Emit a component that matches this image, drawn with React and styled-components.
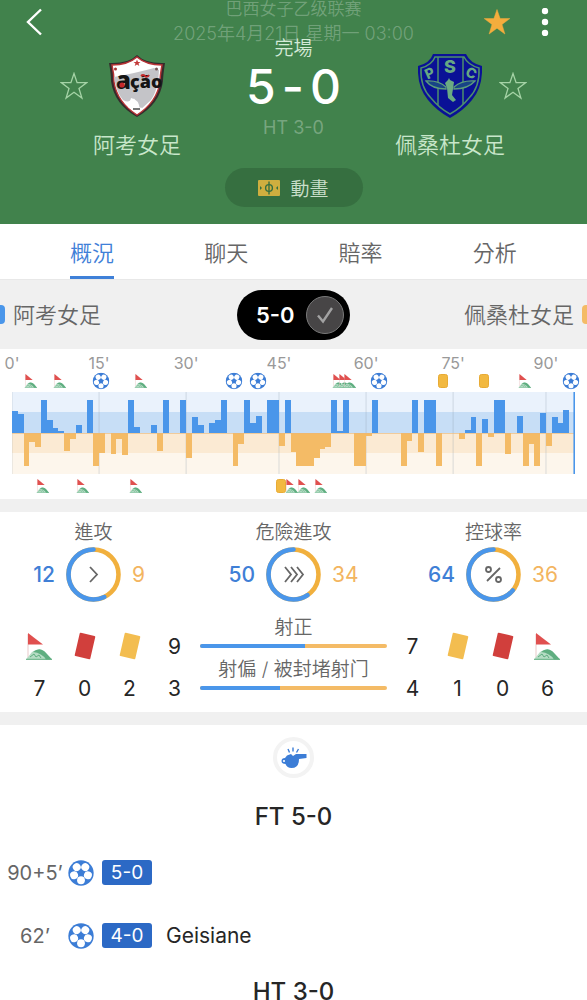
import React, { useState } from 'react'
import styled, { createGlobalStyle, ThemeProvider } from 'styled-components'

const theme = {
  color: {
    pitch: '#41824c',
    home: '#4a96ea',
    homeText: '#3f7fd6',
    away: '#f4bb66',
    awayText: '#f3b560',
    link: '#3f80d8',
    badge: '#2c69c5',
    text: '#262626',
    textMuted: '#666666',
    textFaint: '#999999',
    band: '#f0f0f0',
  },
  // the cut between light and regular, close to system CJK text
  weight: {
    label: 350,
  },
}

const GlobalStyle = createGlobalStyle`
  * {
    box-sizing: border-box;
  }

  body {
    margin: 0;
    background: #ffffff;
    font-family: Inter, "Noto Sans CJK TC", "Noto Sans CJK SC", sans-serif;
  }

  button {
    padding: 0;
    border: 0;
    background: none;
    color: inherit;
    font: inherit;
    cursor: pointer;
  }

  svg {
    display: block;
  }
`

const Screen = styled.div`
  height: 100vh;
  overflow-y: auto;
  scrollbar-width: none;
  color: ${props => props.theme.color.text};
`

/* header */

const Header = styled.header`
  position: relative;
  padding-bottom: 17px;
  background: ${props => props.theme.color.pitch};
`

const Toolbar = styled.div`
  display: flex;
  align-items: center;
  height: 37px;
  padding: 6px 38px 0 26px;
`

const IconButton = styled.button`
  position: relative;
  z-index: 1;
  margin-left: ${props => (props.$push ? 'auto' : '0')};
`

const MoreButton = styled(IconButton)`
  margin-left: 30px;
`

const LeagueInfo = styled.div`
  position: absolute;
  top: 0;
  left: 0;
  right: 0;
  display: flex;
  flex-direction: column;
  gap: 7px;
  color: rgba(255, 255, 255, 0.27);
  font-size: 17px;
  font-weight: ${props => props.theme.weight.label};
  line-height: 18px;
  text-align: center;
`

const KickOff = styled.div`
  font-size: 18px;
`

const Match = styled.div`
  display: flex;
  justify-content: space-between;
  padding: 0 60px;
`

const Team = styled.div`
  width: 154px;
  padding-top: 17px;
`

const CrestRow = styled.div`
  display: grid;
  grid-template-columns: 28px 1fr 28px;
  align-items: center;
  justify-items: center;
  height: 64px;
`

const TeamName = styled.h2`
  margin: 12px 0 0;
  color: rgba(232, 255, 232, 0.82);
  font-size: 22px;
  font-weight: ${props => props.theme.weight.label};
  line-height: 30px;
  text-align: center;
`

const Result = styled.div`
  display: flex;
  flex-direction: column;
  align-items: center;
`

const Status = styled.div`
  margin-top: 1px;
  color: rgba(240, 255, 240, 0.85);
  font-size: 19px;
  font-weight: ${props => props.theme.weight.label};
  line-height: 22px;
`

const Score = styled.div`
  display: flex;
  gap: 6px;
  margin-top: 2px;
  color: #ffffff;
  font-size: 48px;
  font-weight: 500;
  line-height: 50px;
`

const HalfTime = styled.div`
  margin-top: 5px;
  color: rgba(255, 255, 255, 0.3);
  font-size: 18px;
  line-height: 22px;
`

const AnimationButton = styled.button`
  display: flex;
  align-items: center;
  justify-content: center;
  gap: 10px;
  width: 138px;
  height: 39px;
  margin: 8px auto 0;
  border-radius: 20px;
  background: #366f40;
  color: #c9dfca;
  font-size: 19px;
  font-weight: ${props => props.theme.weight.label};
`

/* tabs */

const Tabs = styled.nav`
  display: flex;
  justify-content: space-around;
  padding: 0 25px;
  border-bottom: 1px solid #e8e8e8;
  background: #ffffff;
`

const Tab = styled.a`
  height: 55px;
  border-bottom: 3px solid ${props => (props.$active ? props.theme.color.link : 'transparent')};
  color: ${props => (props.$active ? props.theme.color.link : props.theme.color.textMuted)};
  font-size: 22px;
  font-weight: ${props => props.theme.weight.label};
  line-height: 59px;
  text-decoration: none;
`

const Versus = styled.div`
  display: grid;
  grid-template-columns: 1fr auto 1fr;
  align-items: center;
  height: 69px;
  background: ${props => props.theme.color.band};
  color: ${props => props.theme.color.textMuted};
  font-size: 22px;
  font-weight: ${props => props.theme.weight.label};
  line-height: 30px;
`

const Side = styled.div`
  display: flex;
  align-items: center;
  gap: 8px;
  flex-direction: ${props => (props.$away ? 'row-reverse' : 'row')};
`

const Chip = styled.span`
  width: 5px;
  height: 19px;
  border-radius: ${props => (props.$away ? '4px 0 0 4px' : '0 4px 4px 0')};
  background: ${props => (props.$away ? props.theme.color.away : props.theme.color.home)};
`

const ScoreToggle = styled.button`
  display: flex;
  align-items: center;
  justify-content: space-between;
  width: 113px;
  height: 50px;
  padding: 0 6px 0 19px;
  border-radius: 25px;
  background: #000000;
  color: #ffffff;
  font-size: 22px;
  font-weight: 600;
`

const Check = styled.span`
  display: grid;
  place-items: center;
  width: 38px;
  height: 38px;
  border: 1px solid #7a7a7a;
  border-radius: 50%;
  background: #474546;
  opacity: ${props => (props.$on ? 1 : 0.5)};
`

/* momentum chart */

const Momentum = styled.section`
  padding: 5px 12px 4px;
`

const Track = styled.div`
  position: relative;
  height: 18px;
  margin-top: ${props => (props.$below ? '3px' : '0')};
  margin-bottom: ${props => (props.$above ? '2px' : '0')};
`

const Pin = styled.span`
  position: absolute;
  top: 50%;
  color: ${props => props.theme.color.textFaint};
  font-size: 16px;
  line-height: 18px;
  transform: translate(-50%, -50%);
`

const Plot = styled.svg`
  width: 100%;
  height: 82px;
`

const Divider = styled.div`
  height: 13px;
  background: ${props => props.theme.color.band};
`

/* statistics */

const Stats = styled.section`
  padding: 7px 0 3px;
`

const Rings = styled.div`
  display: flex;
  justify-content: space-between;
  padding: 0 27px;
`

const RingCell = styled.div`
  display: flex;
  flex-direction: column;
  gap: 2px;
  width: 133px;
`

const StatTitle = styled.div`
  padding-top: 2px;
  color: ${props => props.theme.color.textMuted};
  font-size: 19px;
  font-weight: ${props => props.theme.weight.label};
  line-height: 24px;
  text-align: center;
  white-space: nowrap;
`

const RingRow = styled.div`
  display: grid;
  grid-template-columns: 1fr 55px 1fr;
  align-items: center;
  gap: 11px;
`

const RingValue = styled.span`
  color: ${props => (props.$away ? props.theme.color.awayText : props.theme.color.homeText)};
  font-size: 21px;
  font-weight: ${props => (props.$away ? 400 : 500)};
  text-align: ${props => (props.$away ? 'left' : 'right')};
`

const Counts = styled.div`
  display: flex;
  padding: 12px 17px 0;
`

const CountColumn = styled.div`
  display: grid;
  grid-template-rows: 42px 42px;
  place-items: center;
  width: 45px;
  padding-top: 11px;
  font-size: 21px;
`

const Shots = styled.div`
  flex: 1;
  display: flex;
  flex-direction: column;
  gap: 8px;
  padding: 0 3px;
`

const Shot = styled.div`
  display: flex;
  flex-direction: column;
  gap: 4px;
`

const Bar = styled.div`
  height: 4px;
  border-radius: 2px;
  background: ${props => props.theme.color.away};
  overflow: hidden;
`

const Fill = styled.div`
  height: 100%;
  background: ${props => props.theme.color.home};
`

/* timeline */

const Timeline = styled.section`
  padding-top: 12px;
`

const WhistleBadge = styled.div`
  display: grid;
  place-items: center;
  width: 41px;
  height: 41px;
  margin: 0 auto 21px;
  border: 4px solid #f3f3f3;
  border-radius: 50%;
`

const Period = styled.h3`
  margin: 0 0 6px;
  font-size: 24px;
  font-weight: 500;
  line-height: 36px;
  text-align: center;
`

const Goals = styled.ul`
  margin: 0 0 7px;
  padding: 0;
  list-style: none;
`

const Goal = styled.li`
  display: flex;
  align-items: center;
  height: 63px;
  padding-left: 4px;
  font-size: 21px;
`

const Minute = styled.span`
  width: 62px;
  margin-right: 2px;
  color: ${props => props.theme.color.textMuted};
  font-size: 20px;
  text-align: center;
`

const GoalScore = styled.span`
  width: 50px;
  height: 25px;
  margin: 0 14px 0 8px;
  border-radius: 3px;
  background: ${props => props.theme.color.badge};
  color: #ffffff;
  font-size: 19px;
  line-height: 25px;
  text-align: center;
`

const panels = [90, 162, 234, 306, 18]

const Ball = ({ size }) => (
  <svg width={size} height={size} viewBox="0 0 24 24" aria-hidden="true">
    <circle cx="12" cy="12" r="11.7" fill="#3c7dd6" />
    {panels.map(a => (
      <ellipse key={a} cx="18.7" cy="12" rx="3.7" ry="3.6" fill="#fff" transform={`rotate(${a} 12 12)`} />
    ))}
  </svg>
)

const Flag = ({ width = 27, height = 27 }) => (
  <svg width={width} height={height} viewBox="0 0 27 27" preserveAspectRatio="none" aria-hidden="true">
    <path d="M2 1V25" stroke="#e8c9c9" strokeWidth="1" />
    <path d="M2 0L17 11.5H2Z" fill="#e0504f" />
    <path d="M0 26.5L6 19Q9 16.5 13 16.5L19 19L26 26.5Z" fill="#b5dcc4" />
    <path d="M7 19Q14 13 20 20L26 26.5H20Q16 20 7 19Z" fill="#5fae80" />
    <path d="M4 24L8 21L10 24L13 22L15 25" fill="none" stroke="#5fae80" strokeWidth="1" />
    <path d="M0 26.3H26" stroke="#5fae80" strokeWidth="1" />
  </svg>
)

const Card = ({ color }) => (
  <svg width="24" height="28" viewBox="0 0 24 28" aria-hidden="true">
    <rect x="4" y="2" width="16" height="24" rx="1" fill={color} transform="rotate(13 12 14)" />
  </svg>
)

const SmallCard = () => (
  <svg width="10" height="14" viewBox="0 0 10 14" aria-hidden="true">
    <rect x="0.5" y="0.5" width="9" height="13" rx="2" fill="#f2b941" stroke="#e8ab35" />
  </svg>
)

const Star = ({ filled }) => (
  <svg width="28" height="28" viewBox="0 0 28 28" aria-hidden="true">
    <path
      d="M14 1.5L17.1 10.6H26.8L19 16.4L21.9 26L14 20.2L6.1 26L9 16.4L1.2 10.6H10.9Z"
      fill={filled ? '#f4ad3d' : 'none'}
      stroke={filled ? '#f4ad3d' : '#a5d3a6'}
      strokeWidth={filled ? 0.5 : 1.3}
    />
  </svg>
)

const HomeCrest = () => (
  <svg width="58" height="64" viewBox="0 0 58 64" role="img" aria-label="阿考女足">
    <path d="M29 1Q38 10 57 9Q55 22 55 27Q52 50 29 63Q6 50 3 27Q3 20 1 9Q20 10 29 1Z" fill="#352b2c" />
    <path d="M29 3Q38 11 54 11Q52 22 52 28Q49 48 29 61Q9 48 6 28Q6 20 4 11Q20 11 29 3Z" fill="#fff" stroke="#b93336" strokeWidth="1.4" />
    <path d="M6 23Q28 19 46 14L51 16Q50 38 42 47L32 56Q31 45 23 44Q22 50 15 46Q8 38 6 23Z" fill="#c4c4c8" />
    <path d="M26 44L28 53L35 54L29 59L20 53Q25 50 26 44Z" fill="#fff" />
    <path d="M25 55H32" stroke="#777" strokeWidth="2" />
    <path d="M29 5.5L30 8H32.5L30.5 9.5L31.3 12L29 10.5L26.7 12L27.5 9.5L25.5 8H28Z" fill="#c23a3a" />
    <circle cx="7.5" cy="15" r="1.5" fill="#a33" />
    <circle cx="48.5" cy="15" r="1.5" fill="#755" />
    <text x="8" y="35" fill="#151515" fontFamily="Open Sans" fontSize="24" fontWeight="800">a</text>
    <text x="22" y="34" fill="#151515" fontFamily="Open Sans" fontSize="18" fontWeight="800">ção</text>
    <circle cx="14" cy="31" r="2.6" fill="#c5292c" />
    <path d="M33 22Q35 20 37 22T41 21" fill="none" stroke="#c5292c" strokeWidth="1.8" />
  </svg>
)

const AwayCrest = () => (
  <svg width="64" height="64" viewBox="0 0 64 64" role="img" aria-label="佩桑杜女足">
    <path d="M15 0H48Q52 9 64 12Q65 33 54 46Q45 57 32 64Q19 57 10 46Q-1 33 0 12Q12 9 15 0Z" fill="#0a1196" />
    <path
      d="M17 3H46Q50 11 61 14Q62 33 51 44Q43 54 32 60Q21 54 13 44Q2 33 3 14Q14 11 17 3ZM20 3V51M45 3V50"
      fill="none"
      stroke="#4d8f6c"
      strokeWidth="1.5"
    />
    <text x="32" y="19" fill="#67a783" fontFamily="Inter" fontSize="18" fontWeight="800" textAnchor="middle">S</text>
    <text x="12" y="24" fill="#67a783" fontFamily="Inter" fontSize="14" fontWeight="800" textAnchor="middle" transform="rotate(-24 12 20)">P</text>
    <text x="53" y="24" fill="#67a783" fontFamily="Inter" fontSize="14" fontWeight="800" textAnchor="middle" transform="rotate(24 53 20)">C</text>
    <path d="M28 33Q20 26 8 27Q14 35 28 35ZM36 33Q44 26 57 27Q50 35 36 35Z" fill="#174486" stroke="#5c9c7c" strokeWidth="1.3" />
    <path d="M27 29L30 26L31 24L32 26L36 28L35 35L34 41L38 46L35 48L30 44L29 34Z" fill="#6bab82" />
  </svg>
)

const momentum = [
  22, 19, -33, -9, -14, 33, 13, 5, 2, -18, -6, 8, 0, 33, -33, -20, 0, -21, -6, -22,
  33, 6, 0, 0, 8, -18, 33, 0, 0, 33, -25, 16, 8, 0, 10, 13, 33, 0, -33, -11,
  33, 10, 17, 0, 33, 33, -13, 33, -19, -33, -33, -33, -25, -16, -14, 33, 2, 33, 0, -33,
  -33, -3, 33, 0, 0, 0, 0, -33, -8, 33, -19, 33, 33, -33, 0, 0, 0, -6, 3, 16,
  -33, 14, -4, 33, 33, -21, 0, 17, -33, -11, -33, 20, -13, 16, 10, 23, 0,
]

// stoppage time pushes the later marks to the right
const ticks = [
  [0, "0'"],
  [15, "15'"],
  [30, "30'"],
  [46, "45'"],
  [61, "60'"],
  [76, "75'"],
  [92, "90'"],
]

const homeEvents = [
  [3, 'corner'], [8, 'corner'], [15, 'goal'], [22, 'corner'], [38, 'goal'], [42, 'goal'],
  [56, 'corner'], [57, 'corner'], [58, 'corner'], [63, 'goal'], [74, 'card'], [81, 'card'],
  [88, 'corner'], [96, 'goal'],
]

const awayEvents = [
  [5, 'corner'], [12, 'corner'], [21, 'corner'], [46, 'card'], [48, 'corner'], [50, 'corner'], [53, 'corner'],
]

const at = slot => ({ left: `${(slot / momentum.length) * 100}%` })

const EventIcon = ({ type }) => {
  if (type === 'goal') return <Ball size={17} />
  if (type === 'card') return <SmallCard />
  return <Flag width={13} height={14} />
}

const Events = ({ events, ...rest }) => (
  <Track {...rest}>
    {events.map(([slot, type]) => (
      <Pin key={slot} style={at(slot + 0.3)}>
        <EventIcon type={type} />
      </Pin>
    ))}
  </Track>
)

const MomentumChart = () => (
  <Momentum>
    <Track>
      {ticks.map(([slot, label]) => (
        <Pin key={label} style={at(slot)}>{label}</Pin>
      ))}
    </Track>
    <Events events={homeEvents} $above />
    <Plot viewBox={`0 0 ${momentum.length} 82`} preserveAspectRatio="none">
      <rect width="97" height="20" fill="#eaf2fc" />
      <rect y="20" width="97" height="21" fill="#c7def6" />
      <rect y="41" width="97" height="20" fill="#fbead3" />
      <rect y="61" width="97" height="21" fill="#fdf6ec" />
      {ticks.map(([slot]) => (
        <path key={slot} d={`M${slot} 0V82`} stroke="#8c9aa8" strokeOpacity="0.3" vectorEffect="non-scaling-stroke" />
      ))}
      <g shapeRendering="crispEdges">
        {momentum.map((v, i) => (
          <rect
            key={i}
            x={i}
            y={v > 0 ? 41 - v : 41}
            width="1"
            height={Math.abs(v)}
            fill={v > 0 ? '#4a96ea' : '#f4bb66'}
          />
        ))}
      </g>
      <path d="M0 41.5H97" stroke="#e9b577" strokeOpacity="0.6" vectorEffect="non-scaling-stroke" />
      <path d="M96.9 0V82" stroke="#4a96ea" strokeWidth="2" vectorEffect="non-scaling-stroke" />
    </Plot>
    <Events events={awayEvents} $below />
  </Momentum>
)

const ringIcons = {
  attack: <path d="M24 20L31 27.5L24 35" />,
  danger: <path d="M19 20L25 27.5L19 35M25 20L31 27.5L25 35M31 20L37 27.5L31 35" />,
  possession: (
    <>
      <path d="M34 21L21 34" />
      <circle cx="22.5" cy="22.5" r="2.5" />
      <circle cx="32.5" cy="32.5" r="2.5" />
    </>
  ),
}

const Ring = ({ title, icon, home, away }) => (
  <RingCell>
    <StatTitle>{title}</StatTitle>
    <RingRow>
      <RingValue>{home}</RingValue>
      <svg width="55" height="55" viewBox="0 0 55 55" fill="none" aria-hidden="true">
        <circle cx="27.5" cy="27.5" r="25" stroke="#f1b03e" strokeWidth="4.6" />
        <circle
          cx="27.5"
          cy="27.5"
          r="25"
          stroke="#4a96ea"
          strokeWidth="4.6"
          strokeLinecap="round"
          pathLength="100"
          strokeDasharray={`${(home / (home + away)) * 100} 100`}
          transform="matrix(0 -1 -1 0 55 55)"
        />
        <g stroke="#666" strokeWidth="1.8">{ringIcons[icon]}</g>
      </svg>
      <RingValue $away>{away}</RingValue>
    </RingRow>
  </RingCell>
)

const Count = ({ icon, value }) => (
  <CountColumn>
    <span>{icon}</span>
    <span>{value}</span>
  </CountColumn>
)

const ShotBar = ({ title, home, away }) => (
  <Shot>
    <StatTitle>{title}</StatTitle>
    <Bar>
      <Fill style={{ width: `${(home / (home + away)) * 100}%` }} />
    </Bar>
  </Shot>
)

const Whistle = () => (
  <svg width="26" height="22" viewBox="0 0 26 22" aria-hidden="true">
    <path d="M7 2L8.5 5.5M12 0.5V4.5M17.5 2L15.5 5.5" stroke="#3c7dd6" strokeWidth="1.4" fill="none" />
    <path d="M6 8.5L10 7L12 9L15 7H25.5V11L18 12Q18 21 10.5 21Q6 21 4.5 17Q0.5 17 0.5 14Q0.5 11 4 11Z" fill="#3c7dd6" />
    <circle cx="3" cy="14" r="1.1" fill="#fff" />
  </svg>
)

const tabs = ['概況', '聊天', '賠率', '分析']

const goals = [
  { minute: '90+5’', score: '5-0' },
  { minute: '62’', score: '4-0', player: 'Geisiane' },
]

const App = () => {
  const [active, setActive] = useState(0)
  const [showScore, setShowScore] = useState(true)
  const [favourite, setFavourite] = useState(true)

  return (
    <ThemeProvider theme={theme}>
      <GlobalStyle />
      <Screen>
        <Header>
          <LeagueInfo>
            <div>巴西女子乙级联赛</div>
            <KickOff>2025年4月21日 星期一 03:00</KickOff>
          </LeagueInfo>
          <Toolbar>
            <IconButton aria-label="返回">
              <svg width="16" height="28" viewBox="0 0 16 28" fill="none">
                <path d="M15 1.5L2 14L15 26.5" stroke="#fff" strokeWidth="2.4" />
              </svg>
            </IconButton>
            <IconButton $push aria-label="收藏" onClick={() => setFavourite(!favourite)}>
              <Star filled={favourite} />
            </IconButton>
            <MoreButton aria-label="更多">
              <svg width="8" height="28" viewBox="0 0 8 28" fill="#fff">
                <circle cx="4" cy="3" r="3.2" />
                <circle cx="4" cy="14" r="3.2" />
                <circle cx="4" cy="25" r="3.2" />
              </svg>
            </MoreButton>
          </Toolbar>
          <Match>
            <Team>
              <CrestRow>
                <IconButton aria-label="收藏 阿考女足"><Star /></IconButton>
                <HomeCrest />
              </CrestRow>
              <TeamName>阿考女足</TeamName>
            </Team>
            <Result>
              <Status>完場</Status>
              <Score>
                <span>5</span>
                <span>-</span>
                <span>0</span>
              </Score>
              <HalfTime>HT 3-0</HalfTime>
            </Result>
            <Team>
              <CrestRow>
                <span />
                <AwayCrest />
                <IconButton aria-label="收藏 佩桑杜女足"><Star /></IconButton>
              </CrestRow>
              <TeamName>佩桑杜女足</TeamName>
            </Team>
          </Match>
          <AnimationButton>
            <svg width="22" height="16" viewBox="0 0 22 16" aria-hidden="true">
              <rect width="22" height="16" rx="1" fill="#cfae3f" />
              <path d="M11 1.5V14.5" stroke="#366f40" strokeWidth="1.4" />
              <circle cx="11" cy="8" r="3.4" fill="none" stroke="#366f40" strokeWidth="1.4" />
              <path d="M2 6L4 8L2 10ZM20 6L18 8L20 10Z" fill="#366f40" />
            </svg>
            動畫
          </AnimationButton>
        </Header>

        <Tabs>
          {tabs.map((name, i) => (
            <Tab key={name} href={`#tab-${i}`} $active={i === active} onClick={() => setActive(i)}>
              {name}
            </Tab>
          ))}
        </Tabs>

        <Versus>
          <Side>
            <Chip />
            阿考女足
          </Side>
          <ScoreToggle aria-pressed={showScore} onClick={() => setShowScore(!showScore)}>
            5-0
            <Check $on={showScore}>
              <svg width="18" height="18" viewBox="0 0 18 18" fill="none" aria-hidden="true">
                <path d="M2 9.5L7 15.5L16 2" stroke="#a2a2a2" strokeWidth="2.4" />
              </svg>
            </Check>
          </ScoreToggle>
          <Side $away>
            <Chip $away />
            佩桑杜女足
          </Side>
        </Versus>

        <MomentumChart />
        <Divider />

        <Stats>
          <Rings>
            <Ring title="進攻" icon="attack" home={12} away={9} />
            <Ring title="危險進攻" icon="danger" home={50} away={34} />
            <Ring title="控球率" icon="possession" home={64} away={36} />
          </Rings>
          <Counts>
            <Count icon={<Flag />} value={7} />
            <Count icon={<Card color="#d13f3c" />} value={0} />
            <Count icon={<Card color="#f3bd50" />} value={2} />
            <Count icon={9} value={3} />
            <Shots>
              <ShotBar title="射正" home={9} away={7} />
              <ShotBar title="射偏 / 被封堵射门" home={3} away={4} />
            </Shots>
            <Count icon={7} value={4} />
            <Count icon={<Card color="#f3bd50" />} value={1} />
            <Count icon={<Card color="#d13f3c" />} value={0} />
            <Count icon={<Flag />} value={6} />
          </Counts>
        </Stats>
        <Divider />

        <Timeline>
          <WhistleBadge><Whistle /></WhistleBadge>
          <Period>FT 5-0</Period>
          <Goals>
            {goals.map(goal => (
              <Goal key={goal.minute}>
                <Minute>{goal.minute}</Minute>
                <Ball size={26} />
                <GoalScore>{goal.score}</GoalScore>
                {goal.player}
              </Goal>
            ))}
          </Goals>
          <Period>HT 3-0</Period>
        </Timeline>
      </Screen>
    </ThemeProvider>
  )
}

export default App
